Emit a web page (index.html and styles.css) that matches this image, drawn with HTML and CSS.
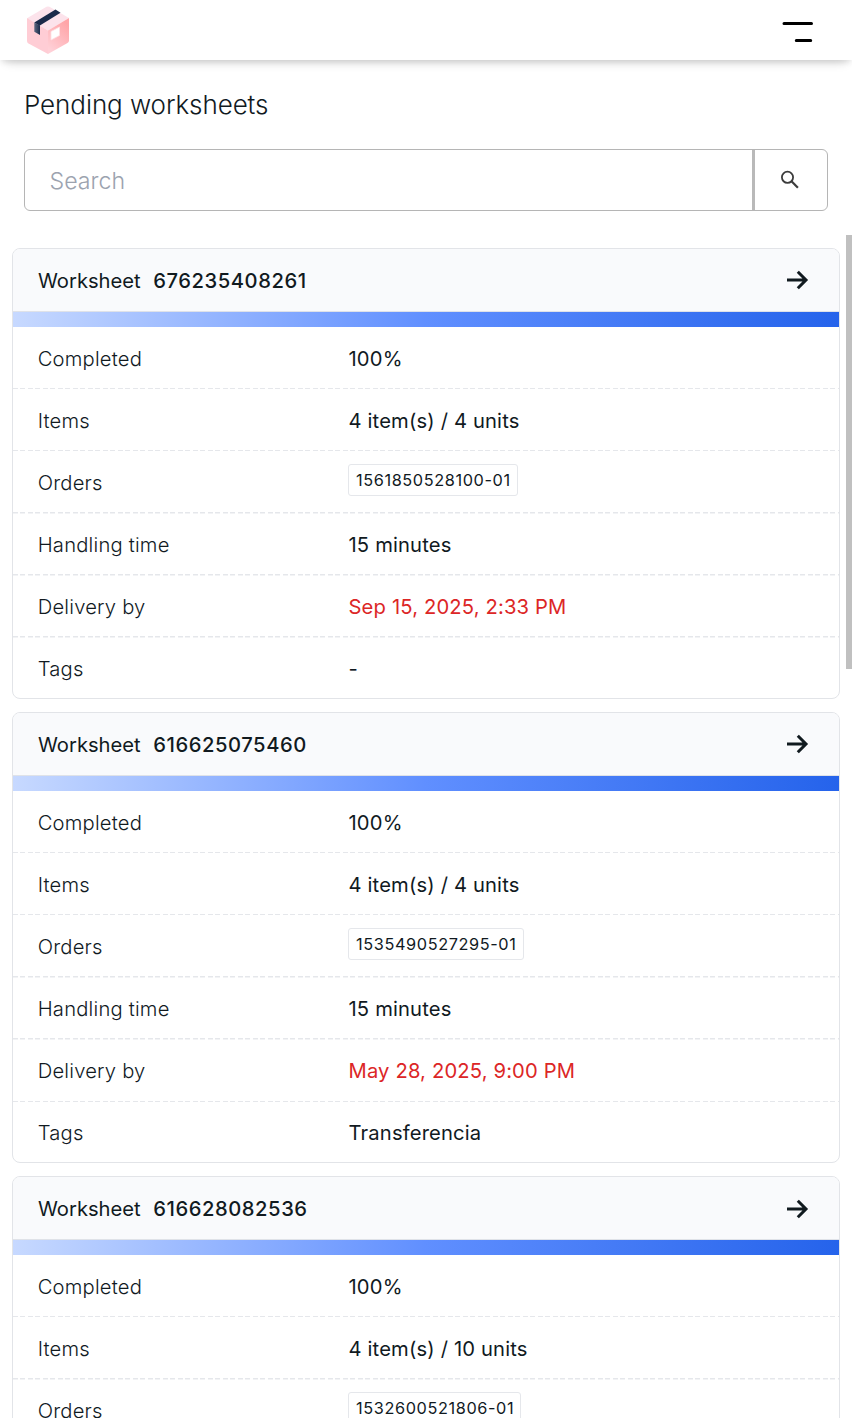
FILE: index.html
```html
<!DOCTYPE html>
<html lang="en">
<head>
<meta charset="utf-8">
<title>Pending worksheets</title>
<link rel="stylesheet" href="styles.css">
</head>
<body>
<div class="screen">
  <header class="topbar">
    <svg class="logo" width="44" height="50" viewBox="0 0 44 50">
      <defs>
        <linearGradient id="side" x1="0.8" y1="0.1" x2="0.3" y2="1"><stop offset="0" stop-color="#ffa5a8"/><stop offset="1" stop-color="#ffd0d7"/></linearGradient>
        <linearGradient id="tape" x1="0" y1="0" x2="1" y2="0"><stop offset="0" stop-color="#5d6880"/><stop offset="1" stop-color="#1b2b4a"/></linearGradient>
      </defs>
      <path d="M1 13.3 20.5 1.8Q22 1 23.500 1.800L43 13 22 25.500Z" fill="#fce3eb"/>
      <path d="M1 13 22 25.500V49L2.500 38.500Q1 37.500 1 36Z" fill="#ffcdd5"/>
      <path d="M43 13V35.500Q43 37 41.500 38L22 49V25.500Z" fill="url(#side)"/>
      <path d="M8.300 17.500 29.500 4.500 34.500 7.800 13.500 20.700Z" fill="#1b2b4a"/>
      <path d="M8.300 17.500 14 20.500V30L8.300 26.800Z" fill="url(#tape)"/>
      <path d="M25 26.500 33.500 22V30.500L25 35Z" fill="#fff" stroke="#ffe0e3" stroke-width=".8"/>
    </svg>
    <svg class="menu" width="32" height="24" viewBox="0 0 32 24" stroke="#000" stroke-width="3" stroke-linecap="round"><path d="M2 3.500H29.500M14.300 20.500H28.700"/></svg>
  </header>
  <h1 class="title">Pending worksheets</h1>
  <div class="search">
    <input class="search-input" type="text" placeholder="Search">
    <button class="search-button" aria-label="Search">
      <svg width="20" height="20" viewBox="0 0 20 20" fill="none" stroke="#3c3c3c" stroke-width="1.800"><circle cx="7.500" cy="7.300" r="5.600"/><path d="m11.500 11.300 6.400 6.500" stroke-width="2.200"/></svg>
    </button>
  </div>
  <main class="list">
    <section class="card">
      <div class="card-head"><span>Worksheet</span><b class="number">676235408261</b><svg class="arrow" width="22" height="20" viewBox="0 0 22 20"><path d="M0 10H19M10.800 1.700 19 10l-8.200 8.300"/></svg></div>
      <div class="bar"></div>
      <dl class="rows">
        <div class="row"><dt>Completed</dt><dd>100%</dd></div>
        <div class="row"><dt>Items</dt><dd>4 item(s) / 4 units</dd></div>
        <div class="row"><dt>Orders</dt><dd><span class="order">1561850528100-01</span></dd></div>
        <div class="row"><dt>Handling time</dt><dd>15 minutes</dd></div>
        <div class="row"><dt>Delivery by</dt><dd class="late">Sep 15, 2025, 2:33 PM</dd></div>
        <div class="row"><dt>Tags</dt><dd>-</dd></div>
      </dl>
    </section>
    <section class="card">
      <div class="card-head"><span>Worksheet</span><b class="number">616625075460</b><svg class="arrow" width="22" height="20" viewBox="0 0 22 20"><path d="M0 10H19M10.800 1.700 19 10l-8.200 8.300"/></svg></div>
      <div class="bar"></div>
      <dl class="rows">
        <div class="row"><dt>Completed</dt><dd>100%</dd></div>
        <div class="row"><dt>Items</dt><dd>4 item(s) / 4 units</dd></div>
        <div class="row"><dt>Orders</dt><dd><span class="order">1535490527295-01</span></dd></div>
        <div class="row"><dt>Handling time</dt><dd>15 minutes</dd></div>
        <div class="row"><dt>Delivery by</dt><dd class="late">May 28, 2025, 9:00 PM</dd></div>
        <div class="row"><dt>Tags</dt><dd>Transferencia</dd></div>
      </dl>
    </section>
    <section class="card">
      <div class="card-head"><span>Worksheet</span><b class="number">616628082536</b><svg class="arrow" width="22" height="20" viewBox="0 0 22 20"><path d="M0 10H19M10.800 1.700 19 10l-8.200 8.300"/></svg></div>
      <div class="bar"></div>
      <dl class="rows">
        <div class="row"><dt>Completed</dt><dd>100%</dd></div>
        <div class="row"><dt>Items</dt><dd>4 item(s) / 10 units</dd></div>
        <div class="row"><dt>Orders</dt><dd><span class="order">1532600521806-01</span></dd></div>
      </dl>
    </section>
    <div class="scrollbar"></div>
  </main>
</div>
</body>
</html>
```
FILE: styles.css
```css
* { box-sizing: border-box; }
html, body { height: 100%; overflow: hidden; }
body { margin: 0; background: #fff; color: #111a1f; font-family: Inter, sans-serif; font-size: 20.2px; font-optical-sizing: none; }
.screen { display: flex; flex-direction: column; height: 1418px; overflow: hidden; }
.topbar { flex: none; display: flex; align-items: center; justify-content: space-between; height: 60px; padding: 0 38.500px 0 26px; box-shadow: 0 8px 10px -6px rgba(0,0,0,.16), 0 3px 6px -1px rgba(0,0,0,.1); }
.menu { margin-top: 4px; }
.title { flex: none; margin: 28px 24px 0; height: 34px; line-height: 34px; font-size: 26px; font-weight: 330; letter-spacing: -.08px; }
.search { flex: none; display: flex; margin: 26.500px 24px 0; height: 62.500px; border: 1.5px solid #b5b5b5; border-radius: 6px; }
.search-input { flex: 1; min-width: 0; padding: 1.500px 24.500px 0; border: 0; background: none; font: 340 23.200px Inter, sans-serif; font-optical-sizing: none; outline: 0; }
.search-input::placeholder { color: #9ca3af; }
.search-button { width: 75.500px; padding: 0 1px 0 0; border: 0; border-left: 3px solid #b9b9b9; background: none; display: flex; align-items: center; justify-content: center; }
.list { position: relative; flex: 1; min-height: 0; margin-top: 24.400px; padding: 12.600px 12px 0; display: flex; flex-direction: column; gap: 12.800px; }
.card { flex: none; border: 1px solid #e2e4e8; border-radius: 8px; overflow: hidden; margin-top: 0; }
.card-head { display: flex; align-items: center; height: 62.800px; padding: 1px 30px 0 25px; border-bottom: 1px solid #dfe2e8; background: #f9fafc; font-weight: 380; }
.card:first-child { margin-top: -.1px; }
.number { margin-left: 12.500px; font-weight: 500; letter-spacing: .56px; }
.arrow { margin-left: auto; fill: none; stroke: #111a1f; stroke-width: 3; }
.bar { height: 15.300px; background: linear-gradient(90deg, #c7d9ff, #608fff 50%, #2563eb); }
.rows { margin: 0; }
.row { display: grid; grid-template-columns: 310.500px 1fr; align-items: center; height: 62.200px; padding: 0 25px; background: repeating-linear-gradient(90deg, #e5e7eb 0 4.800px, transparent 4.800px 7.500px) 0 100% / 100% 1.500px no-repeat; }
.row:nth-child(6) { height: 60.300px; padding-top: 1px; background: none; }
dt { margin-left: -.3px; font-weight: 325; letter-spacing: .2px; }
dd { margin: 0; font-weight: 380; letter-spacing: .16px; }
.late { color: #dc2626; }
.order { display: inline-flex; align-items: center; height: 32px; padding: 0 6.300px 0 7px; border: 1.500px solid #e5e7eb; border-radius: 3px; font-size: 16.300px; letter-spacing: .61px; position: relative; top: -2.800px; left: -.5px; }
.scrollbar { position: absolute; top: 0; right: 0; width: 6px; height: 434px; background: #c0c0c0; }
```
